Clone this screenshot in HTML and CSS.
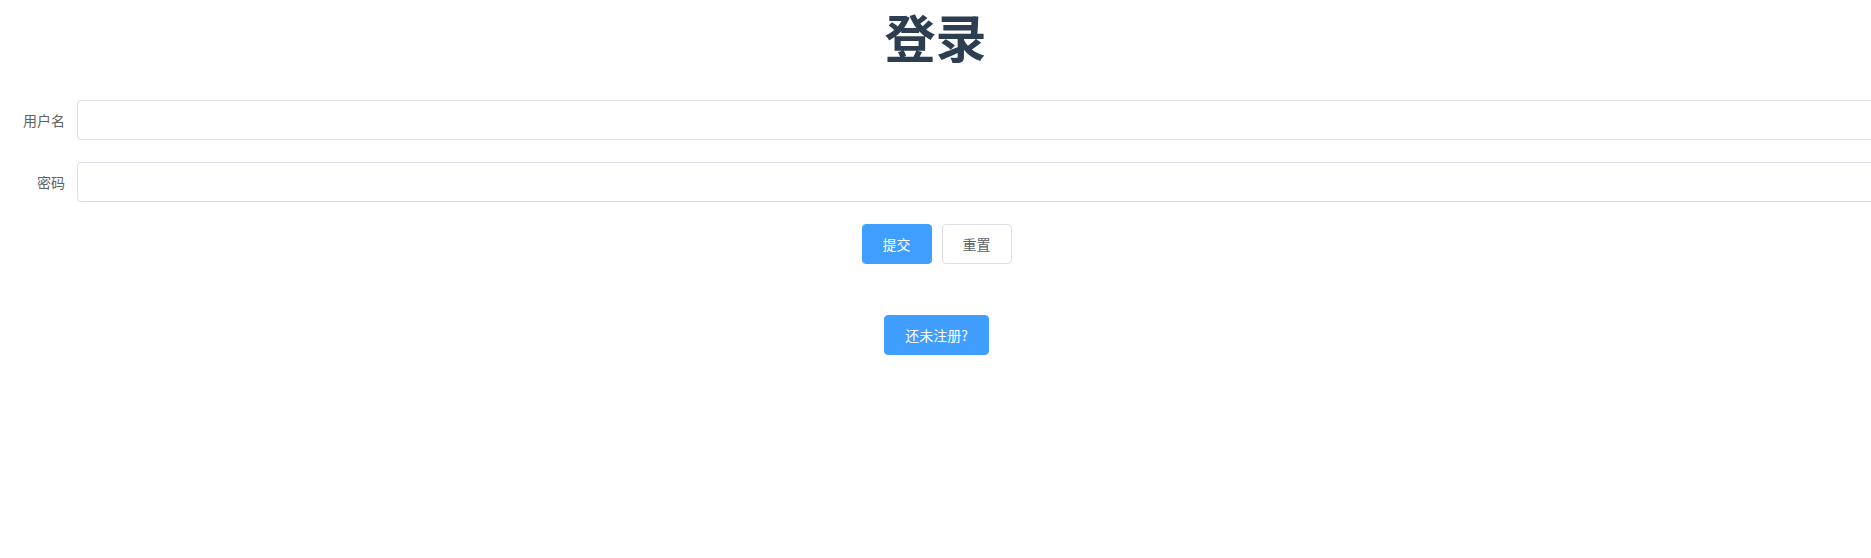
FILE: index.html
```html
<!DOCTYPE html>
<html lang="zh-CN">
<head>
<meta charset="utf-8">
<title>登录</title>
<link rel="stylesheet" href="styles.css">
</head>
<body>
<div class="page">
  <h1 class="title">登录</h1>
  <form class="form">
    <div class="form-item">
      <label class="label">用户名</label>
      <div class="control"><input class="input" type="text"></div>
    </div>
    <div class="form-item">
      <label class="label">密码</label>
      <div class="control"><input class="input" type="password"></div>
    </div>
    <div class="actions">
      <button type="button" class="btn btn-primary">提交</button>
      <button type="button" class="btn btn-default">重置</button>
    </div>
  </form>
  <div class="register">
    <button type="button" class="btn btn-primary">还未注册?</button>
  </div>
</div>
</body>
</html>
```
FILE: styles.css
```css
html, body {
  margin: 0;
  padding: 0;
  background: #ffffff;
  overflow: hidden;
}
body {
  font-family: "Noto Sans CJK SC", "Noto Sans", sans-serif;
  color: #2c3e50;
}
.page {
  width: 1871px;
  height: 558px;
  overflow: hidden;
}
.title {
  margin: 0;
  padding-top: 0;
  height: 78px;
  font-size: 51px;
  line-height: 72px;
  font-weight: 700;
  text-align: center;
  color: #2c3e50;
}
.form {
  margin-top: 22px;
}
.form-item {
  display: flex;
  align-items: center;
  height: 40px;
  margin-bottom: 22px;
}
.label {
  width: 65px;
  flex: none;
  text-align: right;
  font-size: 14px;
  color: #606266;
  padding-right: 12px;
  line-height: 40px;
}
.control {
  flex: 1;
  min-width: 0;
}
.input {
  box-sizing: border-box;
  display: block;
  width: 1900px;
  height: 40px;
  border: 1px solid #dcdfe6;
  border-radius: 4px;
  background: #fff;
  padding: 0 15px;
  font-size: 14px;
  outline: none;
}
.actions {
  display: flex;
  justify-content: center;
  gap: 10px;
  padding-left: 2px;
}
.btn {
  box-sizing: border-box;
  height: 40px;
  padding: 0 20px;
  border-radius: 4px;
  font-family: "Noto Sans CJK SC", "Noto Sans", sans-serif;
  font-size: 14px;
  line-height: 38px;
  cursor: pointer;
}
.btn-primary {
  background: #409eff;
  border: 1px solid #409eff;
  color: #ffffff;
}
.btn-default {
  background: #ffffff;
  border: 1px solid #dcdfe6;
  color: #606266;
}
.register {
  display: flex;
  justify-content: center;
  margin-top: 51px;
  padding-left: 2px;
}
```
